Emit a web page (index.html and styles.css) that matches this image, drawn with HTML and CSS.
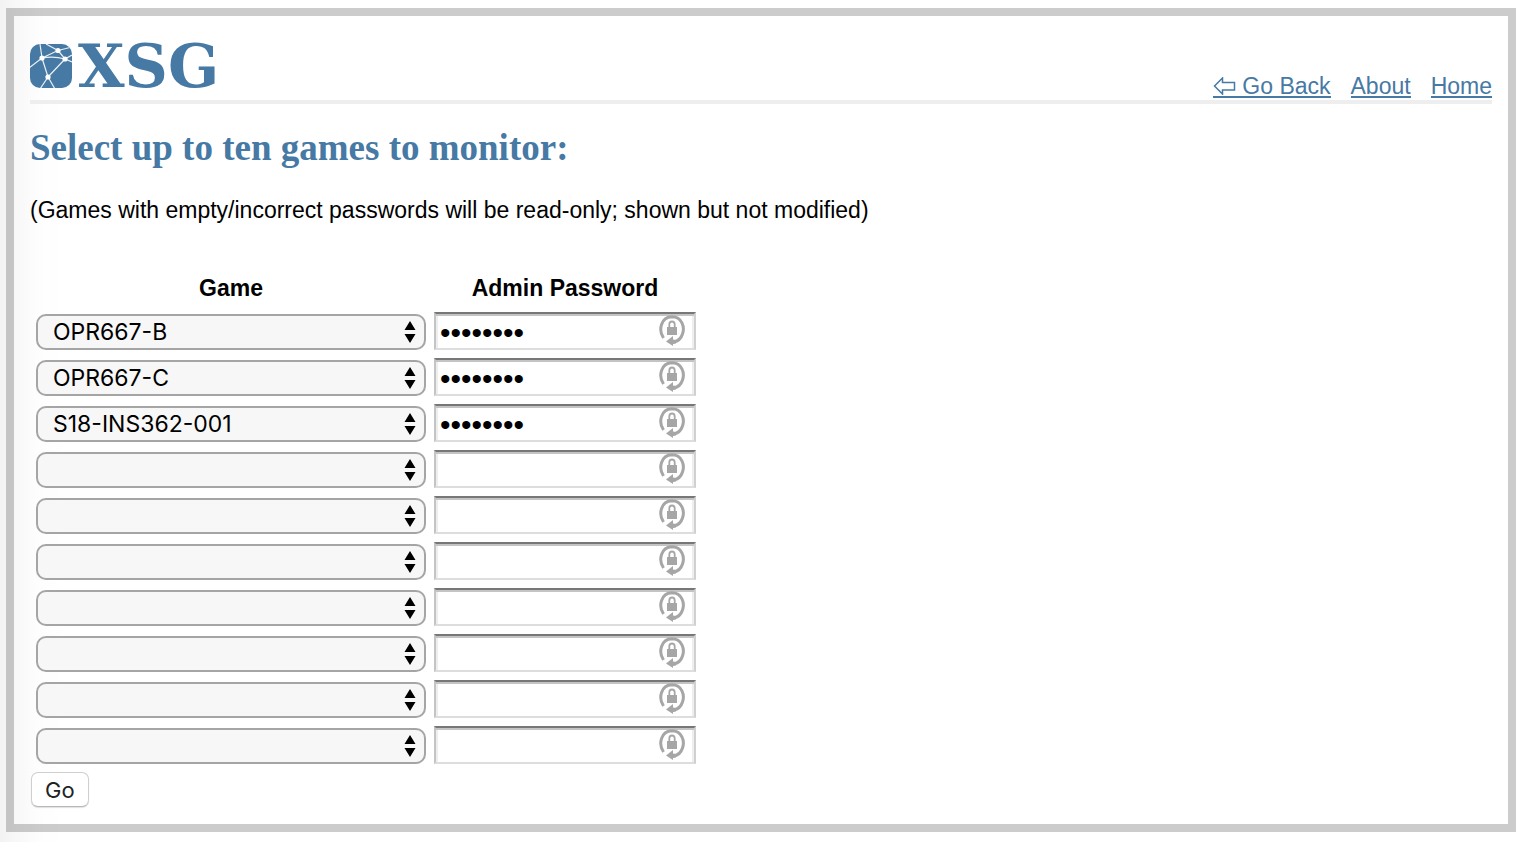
FILE: index.html
```
<!DOCTYPE html>
<html lang="en">
<head>
<meta charset="utf-8">
<title>XSG</title>
<link rel="stylesheet" href="styles.css">
</head>
<body>
<svg class="defs" aria-hidden="true">
  <symbol id="arrows" viewBox="0 0 12 22"><path d="M6 0l5.500 9H.5zM6 22l5.500-9H.5z"/></symbol>
  <symbol id="lock" viewBox="0 0 26 32">
    <path d="M4.500 23C-1 15 2 2 13 1.800C23 2 26 12 23.500 19C22 24 19 26.500 14 27" fill="none" stroke="#a6a6a6" stroke-width="3"/>
    <path d="M7 26.500L14 21v3.500l3 .5v3.500l-3 .5v2z" fill="#a6a6a6"/>
    <path d="M10.300 12V9.500a2.700 3 0 0 1 5.400 0v3" fill="none" stroke="#a6a6a6" stroke-width="1.800"/>
    <path d="M8 12h10V20H8z" fill="#a6a6a6"/>
  </symbol>
</svg>
<div class="frame">
  <header class="header">
    <div class="logo">
      <svg class="logo-mark" viewBox="0 0 42 44" aria-hidden="true">
        <defs><clipPath id="tile"><rect width="42" height="44" rx="10"/></clipPath></defs>
        <g clip-path="url(#tile)">
          <rect width="42" height="44" fill="#4679a4"/>
          <path d="M12 14L10 0M12 14L28 6.500L16 0M28 6.500L42 3M28 6.500L35 15L42 11M35 15L42 18M12 14Q24 12 35 15M12 14L-1 24M12 14L18 33L35 15M18 33L10 45M18 33L25 45" fill="none" stroke="#e9f0f5" stroke-width="1.200"/>
          <g fill="#fff"><circle cx="12" cy="14" r="2.600"/><circle cx="28" cy="6.500" r="2.600"/><circle cx="35" cy="15" r="2.600"/><circle cx="18" cy="33" r="2.600"/></g>
        </g>
      </svg>
      <span class="logo-text">XSG</span>
    </div>
    <nav class="nav">
      <a href="#back"><svg class="back" viewBox="0 0 23 18" aria-hidden="true"><path d="M1.500 9L9.500 1V5.500H21.500V13H9.500V17Z" fill="none" stroke="currentColor" stroke-width="1.500"/></svg>Go Back</a>
      <a href="#about">About</a>
      <a href="#home">Home</a>
    </nav>
  </header>
  <main>
    <h1 class="title">Select up to ten games to monitor:</h1>
    <p class="note">(Games with empty/incorrect passwords will be read-only; shown but not modified)</p>
    <form>
      <table class="games">
        <thead><tr><th id="game" scope="col">Game</th><th id="password" scope="col">Admin Password</th></tr></thead>
        <tbody id="rows"></tbody>
      </table>
      <button class="go" type="button">Go</button>
    </form>
  </main>
</div>
<script src="rows.js"></script>
</body>
</html>
```
FILE: rows.js
```
const games = ["OPR667-B", "OPR667-C", "S18-INS362-001", "", "", "", "", "", "", ""];
document.getElementById("rows").innerHTML = games.map((game) => `
  <tr>
    <td><div class="field">
      <select class="select" aria-labelledby="game"><option>${game}</option></select>
      <svg class="arrows" aria-hidden="true"><use href="#arrows"/></svg>
    </div></td>
    <td><div class="field">
      <input class="password" type="password" aria-labelledby="password" autocomplete="off" value="${game ? "password" : ""}">
      <svg class="lock" aria-hidden="true"><use href="#lock"/></svg>
    </div></td>
  </tr>`).join("");
```
FILE: styles.css
```
* { box-sizing: border-box; }
body {
  margin: 8px 8px 0 6px;
  font: 23px/28px "Liberation Sans", Arial, sans-serif;
  color: #000;
  background: linear-gradient(to right, #f3f3f3, #fdfdfd 36px, #fff 64px);
}
.defs { position: absolute; width: 0; height: 0; }
.frame {
  border: 8px solid rgba(0, 0, 0, 0.2);
  padding: 16px 16px 17px;
}
.header {
  display: flex;
  justify-content: space-between;
  align-items: flex-end;
  height: 72px;
  border-bottom: 4px solid #eee;
}
.logo {
  display: flex;
  align-items: center;
  gap: 6px;
  height: 68px;
  color: #4679a4;
}
.logo-mark { width: 42px; height: 44px; }
.logo-text { font: bold 60px/68px "DejaVu Serif", Georgia, serif; }
.nav { display: flex; gap: 20px; padding-bottom: 2px; }
.nav a {
  display: flex;
  align-items: center;
  gap: 6px;
  border-bottom: 2px solid;
  color: #4679a4;
  line-height: 20px;
  text-decoration: none;
}
.back { width: 23px; height: 18px; }
.title {
  margin: 24px 0 0;
  font: bold 37px/40px "Liberation Serif", Georgia, serif;
  color: #4679a4;
}
.note { margin: 28px 0 0; }
.games { margin-top: 44px; border-spacing: 4px; }
.games th { padding: 2px 2px 4px; }
.games td { padding: 2px; vertical-align: bottom; }
.field { position: relative; display: flex; align-items: center; }
.select {
  appearance: none;
  width: 390px;
  height: 36px;
  padding: 0 40px 0 15px;
  border: 2px solid #a5a5a5;
  border-radius: 10px;
  background: #f7f7f7;
  color: #000;
  font: 23px/28px Inter, sans-serif;
}
.arrows { position: absolute; right: 10px; width: 12px; height: 22px; }
.password {
  width: 262px;
  height: 38px;
  padding: 4px 40px 0 4px;
  border: 2px solid;
  border-color: #777 #d0d0d0 #ddd #c4c4c4;
  box-shadow: inset 0 2px #c4c4c4, inset 2px 0 #eee, inset -2px 0 #eee;
  background: #fff;
  color: #000;
  font: 30px/30px "Liberation Sans", Arial, sans-serif;
}
.lock { position: absolute; right: 11px; top: 3px; width: 26px; height: 32px; }
.go {
  display: block;
  height: 35px;
  margin: 2px 0 0 1px;
  padding: 0 13px;
  border: 1px solid #cfcfcf;
  border-bottom-color: #b8b8b8;
  border-radius: 7px;
  background: #fff;
  box-shadow: 0 1px 1px rgba(0, 0, 0, 0.12);
  color: #222;
  font: 22px/28px Inter, sans-serif;
}
```
